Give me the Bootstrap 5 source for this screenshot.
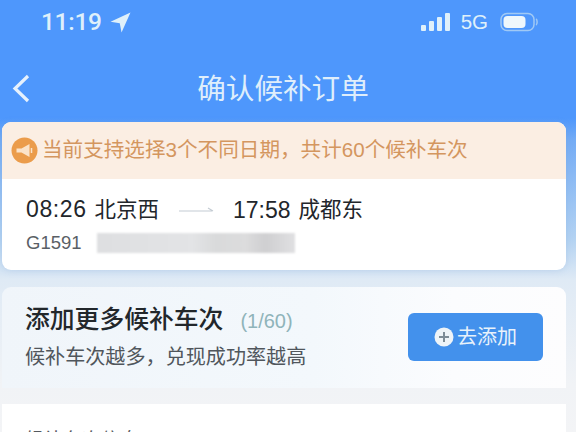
<!DOCTYPE html>
<html lang="zh">
<head>
<meta charset="utf-8">
<title>确认候补订单</title>
<link rel="stylesheet" href="https://cdn.jsdelivr.net/npm/bootstrap@5.3.0/dist/css/bootstrap.min.css">
<style>
html,body{height:432px;overflow:hidden}
body{width:576px;font-family:"Liberation Sans","Noto Sans CJK SC",sans-serif;background:linear-gradient(180deg,#4e97fc 0,#4e97fc 118px,#74acf5 140px,#b4d3f2 240px,#dfeaf5 280px,#f1f3f6 385px,#f3f4f6 432px);color:#1f2226}
.shell{height:432px;overflow:hidden}
.statusrow{height:60px;padding:0 37px 16px 41px;color:#dff0fa}
.clock{font-family:Roboto,sans-serif;font-size:24.500px;font-weight:500;line-height:1;letter-spacing:-.3px}
.fiveg{font-size:20.5px;line-height:1;margin-left:10px;margin-right:12px}
.titlebar{height:58px;color:#dfeefb;padding-right:10px}
.backbtn{left:11px;top:13px}
.titletxt{font-size:28.6px;line-height:1;font-weight:400}
.tripcard{margin:4px 10px 0 2px;height:148px;border-radius:9px;background:#fff;overflow:hidden;box-shadow:0 1px 6px rgba(120,160,210,.25)}
.noticebar{height:57px;padding-left:9px;background:#fbeee3;color:#d4965f;font-size:20.6px;gap:4px}
.noticetxt{white-space:nowrap;line-height:1}
.tripbody{padding:15px 0 0 24px}
.timeline{font-size:23px;line-height:30px;color:#22262b}
.clockdigits{letter-spacing:.6px}
.departstn{width:137px;white-space:nowrap}
.timegap{width:54px}
.stn{font-size:21.5px;margin-left:8px}
.trainrow{margin-top:8px;font-size:18.5px;line-height:20px;color:#5a5f66;width:270px}
.trainno{width:71px}
.maskblur{width:198px;height:20px;background:linear-gradient(90deg,#dedfe1 0,#e3e4e6 48%,#d9dadb 60%,#dcdcdd 75%,#cfcfd1 85%,#e0e0e2 100%);filter:blur(1px)}
.addcard{margin:17px 10px 0 2px;height:101px;border-radius:9px 9px 0 0;background:linear-gradient(90deg,#f0f5fa 0,#f3f8fc 55%,#fbfcfe 80%,#fdfdfe 100%);padding:3px 23px 0 23px}
.addtitle{font-size:24.8px;line-height:34px;color:#22272b;font-weight:500;white-space:nowrap}
.addcount{font-size:20px;color:#8fb4ba;font-weight:400;margin-left:17px}
.addsub{font-size:20.1px;line-height:28px;color:#50565c;white-space:nowrap;margin-top:5px}
.addbtn{width:135px;height:48px;background:#4391ec;border:0;border-radius:6px;color:#e8f2fb;font-size:20px;padding:0;gap:3px}
.addbtn:hover{background:#4391ec;color:#e8f2fb}
.nextcard{margin:16px 10px 0 2px;height:40px;background:#fff;padding:25px 0 0 23px;font-size:19px;line-height:24px;color:#55595e;white-space:nowrap}
</style>
</head>
<body>
<div class="shell">
  <div class="statusrow d-flex align-items-center justify-content-between">
    <div class="d-flex align-items-center gap-1">
      <span class="clock">11:19</span>
      <svg class="ms-1" width="21" height="21" viewBox="0 0 20 20" aria-hidden="true"><path d="M19.500.5 .5 9.200l8.800 1.500 1.700 8.800z" fill="#dff0fa"/></svg>
    </div>
    <div class="d-flex align-items-center">
      <svg width="30" height="20" viewBox="0 0 30 20" aria-hidden="true"><g fill="#dff0fa"><rect x="0" y="13" width="5" height="6" rx="1"/><rect x="8" y="9" width="5" height="10" rx="1"/><rect x="16" y="5" width="5" height="14" rx="1"/><rect x="24" y="1" width="5" height="18" rx="1"/></g></svg>
      <span class="fiveg">5G</span>
      <svg width="39" height="20" viewBox="0 0 39 20" aria-hidden="true"><rect x="1" y="1.500" width="33" height="17" rx="6" fill="none" stroke="#a0c9f5" stroke-width="1.500"/><rect x="3.500" y="4" width="22" height="12" rx="4" fill="#eef7fc"/><path d="M36 7c1.500.7 1.500 5.300 0 6" fill="none" stroke="#a0c9f5" stroke-width="1.500"/></svg>
    </div>
  </div>
  <div class="titlebar position-relative d-flex align-items-center justify-content-center">
    <svg class="backbtn position-absolute" width="20" height="30" viewBox="0 0 20 30" aria-hidden="true"><path d="M17 3 4 15.500 17 28" fill="none" stroke="#e6f1fc" stroke-width="3.200"/></svg>
    <span class="titletxt">确认候补订单</span>
  </div>
  <div class="tripcard">
    <div class="noticebar d-flex align-items-center">
      <svg width="27" height="27" viewBox="0 0 27 27" aria-hidden="true"><circle cx="13.500" cy="13.500" r="13" fill="#eb9c4b"/><path d="M5.500 11.500h5l8-4.500v13l-8-4.500h-5z" fill="#fbe3c9"/><path d="M20.500 11v5" stroke="#fbe3c9" stroke-width="1.500"/></svg>
      <span class="noticetxt">当前支持选择3个不同日期，共计60个候补车次</span>
    </div>
    <div class="tripbody">
      <div class="timeline d-flex align-items-center">
        <span class="departstn"><span class="clockdigits">08:26</span><span class="stn">北京西</span></span>
        <span class="timegap d-flex ps-3"><svg width="36" height="8" viewBox="0 0 36 8" aria-hidden="true"><path d="M0 5h33M29 2l5 3" fill="none" stroke="#c4ccd3" stroke-width="1.200"/></svg></span>
        <span class="ms-3">17:58</span><span class="stn">成都东</span>
      </div>
      <div class="trainrow d-flex align-items-center"><span class="trainno">G1591</span><div class="maskblur"></div></div>
    </div>
  </div>
  <div class="addcard d-flex align-items-center justify-content-between">
    <div class="mb-1">
      <div class="addtitle">添加更多候补车次<span class="addcount">(1/60)</span></div>
      <div class="addsub">候补车次越多，兑现成功率越高</div>
    </div>
    <button type="button" class="btn addbtn d-flex align-items-center justify-content-center mb-1">
      <svg width="20" height="20" viewBox="0 0 20 20" aria-hidden="true"><circle cx="10" cy="10" r="9.500" fill="#eef4f8"/><path d="M10 5v10M5 10h10" stroke="#7d8c96" stroke-width="2"/></svg>
      <span>去添加</span>
    </button>
  </div>
  <div class="nextcard">候补车次信息</div>
</div>
</body>
</html>
